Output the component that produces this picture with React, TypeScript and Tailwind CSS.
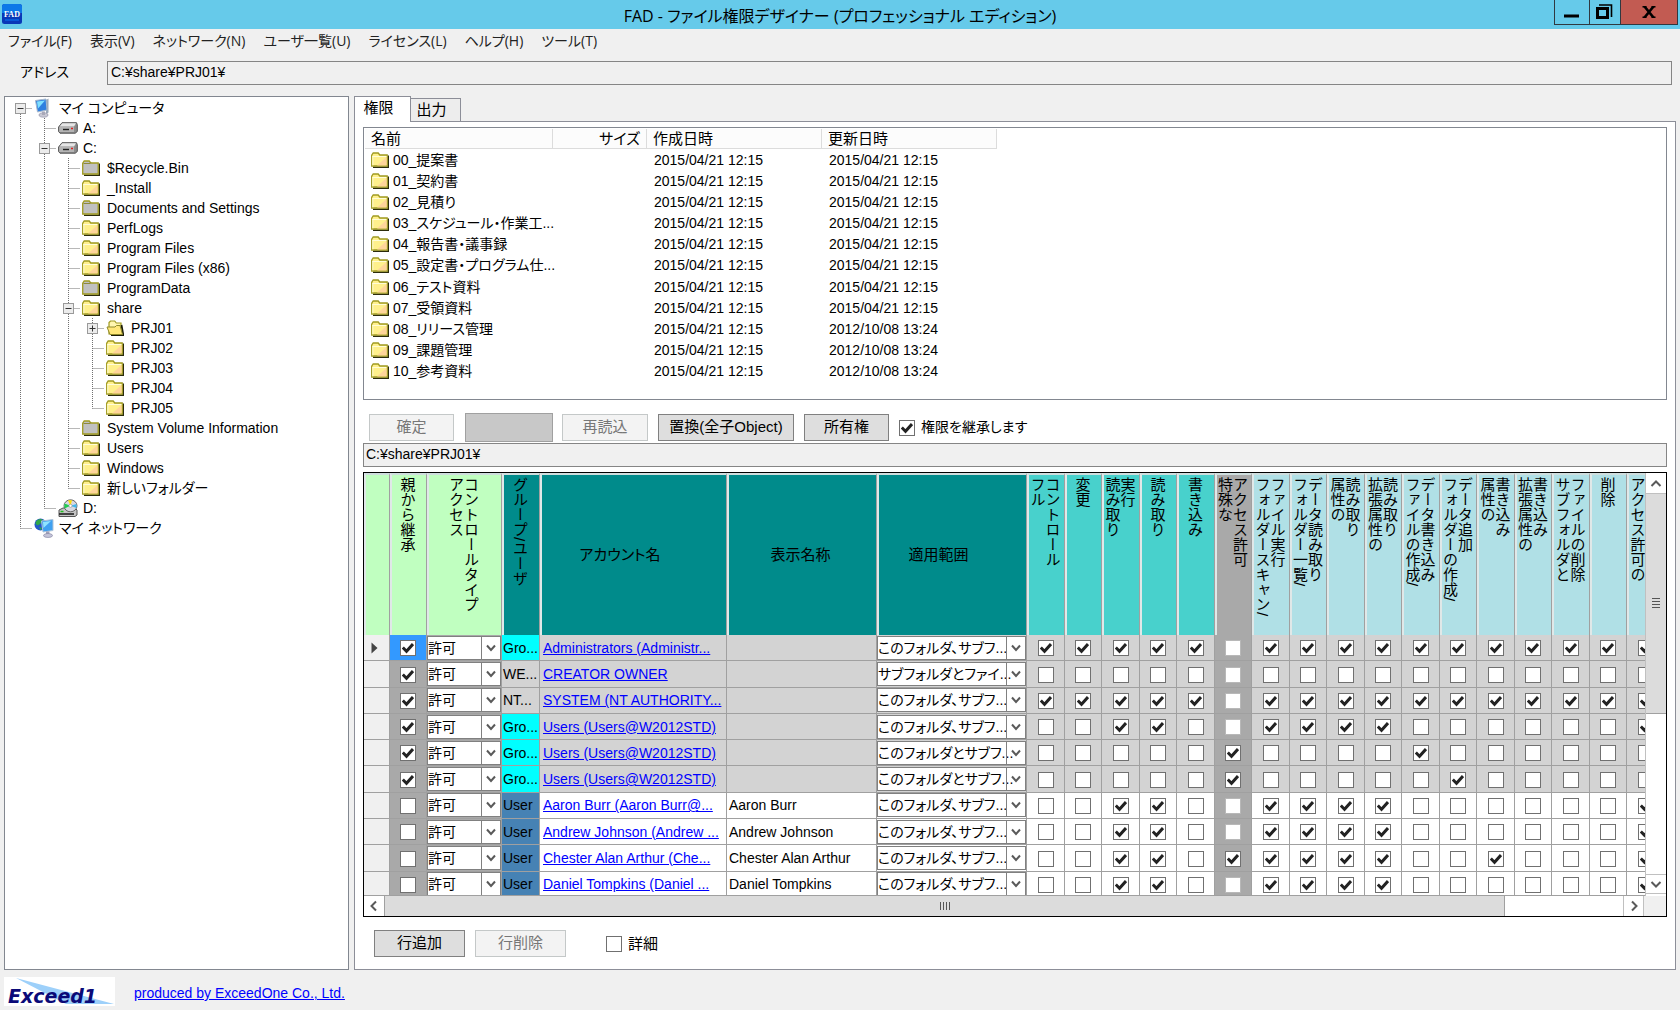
import { useState } from 'react';
import clsx from 'clsx';

/* ---------- Data ---------- */

const MENU = ['ファイル(F)', '表示(V)', 'ネットワーク(N)', 'ユーザ一覧(U)', 'ライセンス(L)', 'ヘルプ(H)', 'ツール(T)'];

type Guide = 'line' | 'tee' | 'end' | 'start';
type IconKind = 'computer' | 'drive' | 'folder' | 'hidden' | 'open' | 'cd' | 'network';

interface TreeNode {
  label: string;
  icon: IconKind;
  guides: Guide[];
  expander?: '+' | '-';
}

const TREE: TreeNode[] = [
  { label: 'マイ コンピュータ', icon: 'computer', guides: ['start'], expander: '-' },
  { label: 'A:', icon: 'drive', guides: ['line', 'tee'] },
  { label: 'C:', icon: 'drive', guides: ['line', 'tee'], expander: '-' },
  { label: '$Recycle.Bin', icon: 'hidden', guides: ['line', 'line', 'tee'] },
  { label: '_Install', icon: 'folder', guides: ['line', 'line', 'tee'] },
  { label: 'Documents and Settings', icon: 'hidden', guides: ['line', 'line', 'tee'] },
  { label: 'PerfLogs', icon: 'folder', guides: ['line', 'line', 'tee'] },
  { label: 'Program Files', icon: 'folder', guides: ['line', 'line', 'tee'] },
  { label: 'Program Files (x86)', icon: 'folder', guides: ['line', 'line', 'tee'] },
  { label: 'ProgramData', icon: 'hidden', guides: ['line', 'line', 'tee'] },
  { label: 'share', icon: 'folder', guides: ['line', 'line', 'tee'], expander: '-' },
  { label: 'PRJ01', icon: 'open', guides: ['line', 'line', 'line', 'tee'], expander: '+' },
  { label: 'PRJ02', icon: 'folder', guides: ['line', 'line', 'line', 'tee'] },
  { label: 'PRJ03', icon: 'folder', guides: ['line', 'line', 'line', 'tee'] },
  { label: 'PRJ04', icon: 'folder', guides: ['line', 'line', 'line', 'tee'] },
  { label: 'PRJ05', icon: 'folder', guides: ['line', 'line', 'line', 'end'] },
  { label: 'System Volume Information', icon: 'hidden', guides: ['line', 'line', 'tee'] },
  { label: 'Users', icon: 'folder', guides: ['line', 'line', 'tee'] },
  { label: 'Windows', icon: 'folder', guides: ['line', 'line', 'tee'] },
  { label: '新しいフォルダー', icon: 'folder', guides: ['line', 'line', 'end'] },
  { label: 'D:', icon: 'cd', guides: ['line', 'end'] },
  { label: 'マイ ネットワーク', icon: 'network', guides: ['end'] },
];

const FILES = [
  { name: '00_提案書', created: '2015/04/21 12:15', updated: '2015/04/21 12:15' },
  { name: '01_契約書', created: '2015/04/21 12:15', updated: '2015/04/21 12:15' },
  { name: '02_見積り', created: '2015/04/21 12:15', updated: '2015/04/21 12:15' },
  { name: '03_スケジュール・作業工...', created: '2015/04/21 12:15', updated: '2015/04/21 12:15' },
  { name: '04_報告書・議事録', created: '2015/04/21 12:15', updated: '2015/04/21 12:15' },
  { name: '05_設定書・プログラム仕...', created: '2015/04/21 12:15', updated: '2015/04/21 12:15' },
  { name: '06_テスト資料', created: '2015/04/21 12:15', updated: '2015/04/21 12:15' },
  { name: '07_受領資料', created: '2015/04/21 12:15', updated: '2015/04/21 12:15' },
  { name: '08_リリース管理', created: '2015/04/21 12:15', updated: '2012/10/08 13:24' },
  { name: '09_課題管理', created: '2015/04/21 12:15', updated: '2012/10/08 13:24' },
  { name: '10_参考資料', created: '2015/04/21 12:15', updated: '2012/10/08 13:24' },
];

const RIGHTS: { lines: string[]; tone: 'basic' | 'special' | 'detail' }[] = [
  { lines: ['フル', 'コントロール'], tone: 'basic' },
  { lines: ['変更'], tone: 'basic' },
  { lines: ['読み取り', '実行'], tone: 'basic' },
  { lines: ['読み取り'], tone: 'basic' },
  { lines: ['書き込み'], tone: 'basic' },
  { lines: ['特殊な', 'アクセス許可'], tone: 'special' },
  { lines: ['フォルダースキャン/', 'ファイル実行'], tone: 'detail' },
  { lines: ['フォルダー一覧/', 'データ読み取り'], tone: 'detail' },
  { lines: ['属性の', '読み取り'], tone: 'detail' },
  { lines: ['拡張属性の', '読み取り'], tone: 'detail' },
  { lines: ['ファイルの作成/', 'データ書き込み'], tone: 'detail' },
  { lines: ['フォルダーの作成/', 'データ追加'], tone: 'detail' },
  { lines: ['属性の', '書き込み'], tone: 'detail' },
  { lines: ['拡張属性の', '書き込み'], tone: 'detail' },
  { lines: ['サブフォルダと', 'ファイルの削除'], tone: 'detail' },
  { lines: ['削除'], tone: 'detail' },
  { lines: ['アクセス許可の', '読み取り'], tone: 'detail' },
];

const TONES = {
  basic: 'bg-[#48d1cc]',
  special: 'bg-[#a9a9a9]',
  detail: 'bg-[#b0e0e6]',
};

const SUBFOLDERS = 'このフォルダ、サブフ...';

// rights: one digit per column of RIGHTS
const ENTRIES = [
  { inherited: true, kind: 'Gro...', account: 'Administrators (Administr...', display: '', scope: SUBFOLDERS, rights: '11111011111111111' },
  { inherited: true, kind: 'WE...', account: 'CREATOR OWNER', display: '', scope: 'サブフォルダとファイ...', rights: '00000000000000000' },
  { inherited: true, kind: 'NT...', account: 'SYSTEM (NT AUTHORITY...', display: '', scope: SUBFOLDERS, rights: '11111011111111111' },
  { inherited: true, kind: 'Gro...', account: 'Users (Users@W2012STD)', display: '', scope: SUBFOLDERS, rights: '00110011110000001' },
  { inherited: true, kind: 'Gro...', account: 'Users (Users@W2012STD)', display: '', scope: 'このフォルダとサブフ...', rights: '00000100001000000' },
  { inherited: true, kind: 'Gro...', account: 'Users (Users@W2012STD)', display: '', scope: 'このフォルダとサブフ...', rights: '00000100000100000' },
  { inherited: false, kind: 'User', account: 'Aaron Burr (Aaron Burr@...', display: 'Aaron Burr', scope: SUBFOLDERS, rights: '00110011110000001' },
  { inherited: false, kind: 'User', account: 'Andrew Johnson (Andrew ...', display: 'Andrew Johnson', scope: SUBFOLDERS, rights: '00110011110000001' },
  { inherited: false, kind: 'User', account: 'Chester Alan Arthur (Che...', display: 'Chester Alan Arthur', scope: SUBFOLDERS, rights: '00110111110010001' },
  { inherited: false, kind: 'User', account: 'Daniel Tompkins (Daniel ...', display: 'Daniel Tompkins', scope: SUBFOLDERS, rights: '00110011110000001' },
];

/* ---------- Icons ---------- */

function FolderIcon({ gray = false }: { gray?: boolean }) {
  return (
    <svg className="h-4 w-[18px] shrink-0" viewBox="0 0 18 16">
      <path d="M2 15.2h15.2V3.5" fill="none" stroke="#2c2c0c" strokeWidth="1.6" />
      <path d="M.7 14V3.2L2.2 1h5l1.6 2h7.4v11z" fill={gray ? '#c0c0c0' : '#fff08c'} stroke="#a09a20" strokeWidth="1.3" />
      {gray ? (
        <path d="M1.5 3.5h6.700l.8-1" fill="none" stroke="#8f8a3a" />
      ) : (
        <>
          <path d="M6 13.400L15.600 5v8.400z" fill="#ffd59a" />
          <path d="M1.500 4.500h14M1.800 4v9.400" fill="none" stroke="#fffdd8" />
        </>
      )}
    </svg>
  );
}

function TreeIcon({ kind }: { kind: IconKind }) {
  switch (kind) {
    case 'folder':
      return <FolderIcon />;
    case 'hidden':
      return <FolderIcon gray />;
    case 'open':
      return (
        <svg className="h-4 w-[18px] shrink-0" viewBox="0 0 18 16">
          <path d="M3 14V2.500L4.500 1h4.200l1.600 2h4.700v11z" fill="#fff6b0" stroke="#a09a20" strokeWidth="1.2" />
          <path d="M15.500 5l1.700 9.500v1H5" fill="none" stroke="#1c1c08" strokeWidth="1.8" />
          <path d="M4 14.500L1 7h8l1.500-1.500H14l2.500 9z" fill="#ffe77a" stroke="#8f8a2a" />
        </svg>
      );
    case 'drive':
      return (
        <svg className="h-3 w-5 shrink-0" viewBox="0 0 20 12">
          <path d="M4 .7h14.500l.8 2v6.500l-1.800 2H2L.6 9.500V5z" fill="#8c8c8c" stroke="#555" />
          <path d="M4.300 1.200H18L16 4.500H1.500z" fill="#e6e6e6" />
          <path d="M1.200 5H16v5H1.200z" fill="#b4b4b4" />
          <path d="M5 7.500h6" stroke="#222" strokeWidth="1.4" />
          <path d="M13 6.500h2" stroke="#e02020" strokeWidth="1.4" />
        </svg>
      );
    case 'cd':
      return (
        <svg className="h-[18px] w-5 shrink-0" viewBox="0 0 20 18">
          <path d="M1 11l4-2h12l2 2v5l-2 1.500H1z" fill="#c4c4c4" stroke="#555" />
          <ellipse cx="12.500" cy="6.800" rx="6.500" ry="6" fill="#d8d8e0" stroke="#666" />
          <path d="M12.500 6.800L10 1.300h4z" fill="#ffe000" />
          <path d="M12.500 6.800L6.500 4.500v5z" fill="#20d050" />
          <path d="M12.500 6.800l6-1.800v4z" fill="#40b8f0" />
          <circle cx="12.500" cy="6.800" r="1.600" fill="#fff" stroke="#888" strokeWidth=".6" />
          <path d="M1 15h15" stroke="#222" strokeWidth="1.600" />
          <path d="M2.500 12.500h3" stroke="#20c020" strokeWidth="1.500" />
        </svg>
      );
    case 'computer':
      return (
        <svg className="h-5 w-[18px] shrink-0" viewBox="0 0 18 20">
          <path d="M12 2l2.500-1.500v14l-2.500 2z" fill="#9aa8b8" />
          <path d="M1.500 2.500L12 1l1 11-9.500 2z" fill="#2f7fe0" stroke="#a8b8cc" />
          <path d="M3 3.500l8-1-7 8z" fill="#7fe0ff" />
          <ellipse cx="9.500" cy="17" rx="4.500" ry="2.200" fill="#c8c8d4" stroke="#8888a0" strokeWidth=".6" />
          <path d="M8 13.500h3V17H8z" fill="#a8a8b8" />
        </svg>
      );
    case 'network':
      return (
        <svg className="h-5 w-5 shrink-0" viewBox="0 0 20 20">
          <circle cx="6.500" cy="6.500" r="6" fill="#2458c8" />
          <path d="M2 3.500C4 .8 7 .5 8.500 1.500L7 5 4 7.500 1.500 6zM5 9l3 1-1.500 2.200z" fill="#30a848" />
          <path d="M7.500 3L19 1.500v11L9 14z" fill="#3fa0f0" stroke="#b0c4d8" />
          <path d="M9 4l8-1-7.500 7z" fill="#90e4ff" />
          <path d="M12 13.500h3.500V17H12z" fill="#a0a0b8" />
          <ellipse cx="14" cy="17.500" rx="4.500" ry="2" fill="#c4c4d8" stroke="#8080a0" strokeWidth=".6" />
        </svg>
      );
  }
}

function Chevron({ className, d }: { className: string; d: string }) {
  return (
    <svg className={className} viewBox="0 0 12 12" fill="none" stroke="#5a5a5a" strokeWidth="2">
      <path d={d} />
    </svg>
  );
}

/* ---------- Small controls ---------- */

function Tick({ checked, label, faint = false }: { checked: boolean; label: string; faint?: boolean }) {
  const [on, setOn] = useState(checked);
  return (
    <span className="inline-grid size-4 shrink-0 place-items-center align-middle">
      <input
        type="checkbox"
        aria-label={label}
        checked={on}
        onChange={() => setOn(!on)}
        className={clsx(
          'col-start-1 row-start-1 size-4 appearance-none border bg-white',
          faint && !on ? 'border-[#b8b8b8]' : 'border-[#707070]'
        )}
      />
      {on && (
        <svg className="pointer-events-none col-start-1 row-start-1 size-3" viewBox="0 0 12 12" fill="none" stroke="#222" strokeWidth="3">
          <path d="M.8 5.500L4.500 9.200 11 2" />
        </svg>
      )}
    </span>
  );
}

function Combo({ value, label }: { value: string; label: string }) {
  return (
    <div className="grid h-6">
      <select
        aria-label={label}
        defaultValue={value}
        className="col-start-1 row-start-1 w-full appearance-none border border-[#808080] bg-white text-sm text-black"
      >
        <option>{value}</option>
      </select>
      <span className="pointer-events-none col-start-1 row-start-1 flex w-5 items-center justify-center justify-self-end border border-[#808080]">
        <Chevron className="size-3" d="M2 3.500l4 4.500 4-4.500" />
      </span>
    </div>
  );
}

function PushButton({ children, disabled = false, className }: { children?: React.ReactNode; disabled?: boolean; className?: string }) {
  return (
    <button
      disabled={disabled}
      className={clsx(
        'h-[27px] border pb-0.5 text-[15px]',
        disabled ? 'border-[#c4c8c8] bg-[#f3f3f3] text-[#777]' : 'border-[#808080] bg-[#dedede]',
        className
      )}
    >
      {children}
    </button>
  );
}

/* ---------- Tree ---------- */

const GUIDE_PATHS: Record<Guide, string> = {
  line: 'M12.500 0v20',
  tee: 'M12.500 0v20M12.500 10.500h11.500',
  end: 'M12.500 0v10.500M12.500 10.500h11.500',
  start: 'M12.500 10v10M12.500 10.500h11.500',
};

function TreeRow({ node }: { node: TreeNode }) {
  return (
    <li className="flex h-5 items-center whitespace-nowrap">
      {node.guides.map((guide, i) => (
        <svg key={i} className="h-5 w-6 shrink-0" viewBox="0 0 24 20" fill="none">
          <path d={GUIDE_PATHS[guide]} stroke="#707070" strokeDasharray="1 1" />
          {node.expander && i === node.guides.length - 1 && (
            <>
              <rect x="7.500" y="5.500" width="10" height="10" fill="#ececec" stroke="#9a9a9a" />
              <path d={node.expander === '+' ? 'M9.500 10.500h6M12.500 7.500v6' : 'M9.500 10.500h6'} stroke="#333" />
            </>
          )}
        </svg>
      ))}
      <span className="flex w-[27px] shrink-0 items-center pl-0.5">
        <TreeIcon kind={node.icon} />
      </span>
      <span>{node.label}</span>
    </li>
  );
}

/* ---------- File list ---------- */

function FileList() {
  return (
    <div className="h-[273px] shrink-0 overflow-hidden border border-[#828790] bg-white p-px">
      <table className="h-[253px] w-[632px] table-fixed border-separate border-spacing-0 text-left">
        <colgroup>
          <col className="w-[188px]" />
          <col className="w-[94px]" />
          <col className="w-[175px]" />
          <col className="w-[175px]" />
        </colgroup>
        <thead>
          <tr className="h-5">
            {['名前', 'サイズ', '作成日時', '更新日時'].map((title) => (
              <th
                key={title}
                className={clsx(
                  'h-5 border-r border-b border-[#dcdcdc] bg-[#fcfcfc] px-1.5 py-0 text-[15px] leading-[18px] font-normal',
                  title === 'サイズ' && 'text-right'
                )}
              >
                {title}
              </th>
            ))}
          </tr>
        </thead>
        <tbody>
          {FILES.map((file) => (
            <tr key={file.name}>
              <td className="p-0 pl-1.5 leading-5">
                <span className="flex items-center gap-1 whitespace-nowrap">
                  <FolderIcon />
                  {file.name}
                </span>
              </td>
              <td className="p-0" />
              <td className="p-0 pl-[7px] leading-5">{file.created}</td>
              <td className="p-0 pl-[7px] leading-5">{file.updated}</td>
            </tr>
          ))}
        </tbody>
      </table>
    </div>
  );
}

/* ---------- Permission grid ---------- */

const HEAD =
  'h-[162px] overflow-hidden border-t-2 border-r border-l-2 border-t-[#cfdede] border-r-[#a0a0a0] border-l-[#e0e8e8] p-0 text-[15px] font-normal';
const CELL = 'overflow-hidden border-r border-b border-[#a0a0a0] p-0 whitespace-nowrap';

function VerticalHead({ lines, tone }: { lines: string[]; tone: string }) {
  return (
    <th className={clsx(HEAD, 'align-top', tone)}>
      <div className="flex justify-center pt-0.5 pr-1">
        <div className="[writing-mode:vertical-lr] text-left leading-[15px] [font-feature-settings:normal]">
          {lines.map((line, i) => (
            <div key={i}>{line}</div>
          ))}
        </div>
      </div>
    </th>
  );
}

function PermissionGrid() {
  return (
    <div className="mt-[5px] flex min-h-0 flex-1 flex-col border border-black bg-[#f0f0f0]">
      <div className="flex min-h-0 flex-1">
        <div className="min-w-0 flex-1 overflow-hidden border-b border-[#a0a0a0] bg-white">
          <table className="h-[425px] w-[1301px] table-fixed border-separate border-spacing-0 text-left">
            <colgroup>
              <col className="w-[26px]" />
              <col className="w-[37px]" />
              <col className="w-[75px]" />
              <col className="w-[38px]" />
              <col className="w-[187px]" />
              <col className="w-[150px]" />
              <col className="w-[150px]" />
              {RIGHTS.map((_, i) => (
                <col key={i} className={i % 2 ? 'w-[37px]' : 'w-[38px]'} />
              ))}
            </colgroup>
            <thead>
              <tr className="h-[162px]">
                <th className={clsx(HEAD, 'bg-[#c0ffc0]')} aria-label="行" />
                <VerticalHead lines={['親から継承']} tone="bg-[#c0ffc0]" />
                <VerticalHead lines={['アクセス', 'コントロールタイプ']} tone="bg-[#c0ffc0]" />
                <VerticalHead lines={['グループ/ユーザ']} tone="bg-[#008b8b]" />
                <th className={clsx(HEAD, 'bg-[#008b8b] pr-7 text-center align-middle')}>アカウント名</th>
                <th className={clsx(HEAD, 'bg-[#008b8b] pr-1 text-center align-middle')}>表示名称</th>
                <th className={clsx(HEAD, 'bg-[#008b8b] pr-7 text-center align-middle')}>適用範囲</th>
                {RIGHTS.map((right, i) => (
                  <VerticalHead key={i} lines={right.lines} tone={TONES[right.tone]} />
                ))}
              </tr>
            </thead>
            <tbody>
              {ENTRIES.map((entry, row) => (
                <tr key={row} className={entry.inherited ? 'bg-[#d3d3d3]' : 'bg-white'}>
                  <td className={clsx(CELL, 'bg-[#f0f0f0]')}>
                    {row === 0 && (
                      <svg className="ml-[7px] h-3 w-[7px]" viewBox="0 0 7 12">
                        <path d="M.5.5L6.500 6 .5 11.500z" fill="#444" />
                      </svg>
                    )}
                  </td>
                  <td className={clsx(CELL, 'text-center leading-4', row === 0 ? 'bg-[#3399ff]' : 'bg-[#a9a9a9]')}>
                    <Tick checked={entry.inherited} label="親から継承" />
                  </td>
                  <td className={clsx(CELL, 'bg-[#a9a9a9]')}>
                    <Combo value="許可" label="アクセスコントロールタイプ" />
                  </td>
                  <td
                    className={clsx(
                      CELL,
                      entry.kind === 'Gro...' && 'bg-[#00ffff]',
                      entry.kind === 'User' && 'bg-[#4682b4]'
                    )}
                  >
                    <span className="pl-px">{entry.kind}</span>
                  </td>
                  <td className={CELL}>
                    <a href="#account" className="ml-[3px] text-[#0000ff] underline">
                      {entry.account}
                    </a>
                  </td>
                  <td className={CELL}>
                    <span className="pl-0.5">{entry.display}</span>
                  </td>
                  <td className={CELL}>
                    <Combo value={entry.scope} label="適用範囲" />
                  </td>
                  {RIGHTS.map((right, i) => (
                    <td key={i} className={clsx(CELL, 'text-center leading-4', right.tone === 'special' && 'bg-[#a9a9a9]')}>
                      <Tick checked={entry.rights[i] === '1'} label={right.lines.join('')} faint={right.tone === 'special'} />
                    </td>
                  ))}
                </tr>
              ))}
            </tbody>
          </table>
        </div>

        {/* Vertical scroll bar */}
        <div className="flex w-[21px] flex-col border-l border-[#c0c0c0] bg-white pt-px">
          <button aria-label="上へ" className="flex h-5 items-center justify-center border-b border-[#c0c0c0]">
            <Chevron className="size-3" d="M1.500 8L6 3.500 10.500 8" />
          </button>
          <div className="flex flex-[15] flex-col items-center justify-center gap-0.5 border-b border-[#a0a0a0] bg-[#dcdcdc]">
            <span className="h-px w-2 bg-[#555]" />
            <span className="h-px w-2 bg-[#555]" />
            <span className="h-px w-2 bg-[#555]" />
            <span className="h-px w-2 bg-[#555]" />
          </div>
          <div className="flex-[11]" />
          <button aria-label="下へ" className="mb-0.5 flex h-5 items-center justify-center border-y border-[#c0c0c0]">
            <Chevron className="size-3" d="M1.500 4L6 8.500 10.500 4" />
          </button>
        </div>
      </div>

      {/* Horizontal scroll bar */}
      <div className="flex h-5 shrink-0">
        <div className="flex flex-1 bg-white">
          <button aria-label="左へ" className="flex w-[21px] items-center justify-center border-r border-[#a0a0a0]">
            <Chevron className="size-3" d="M8 1.500L3.500 6 8 10.500" />
          </button>
          <div className="flex flex-[19] items-center justify-center gap-0.5 border-r border-[#a0a0a0] bg-[#dcdcdc]">
            <span className="h-2 w-px bg-[#555]" />
            <span className="h-2 w-px bg-[#555]" />
            <span className="h-2 w-px bg-[#555]" />
            <span className="h-2 w-px bg-[#555]" />
          </div>
          <div className="flex-[2]" />
          <button aria-label="右へ" className="flex w-[21px] items-center justify-center border-x border-[#c0c0c0]">
            <Chevron className="size-3" d="M4 1.500L8.500 6 4 10.500" />
          </button>
        </div>
        <div className="w-[22px]" />
      </div>
    </div>
  );
}

/* ---------- Window ---------- */

export default function App() {
  return (
    <div className="flex h-screen flex-col bg-[#f0f0f0] font-['Liberation_Sans','Noto_Sans_CJK_JP',sans-serif] text-sm leading-5 text-black [font-feature-settings:'palt']">
      {/* Title bar */}
      <header className="flex h-[29px] shrink-0 items-start bg-[#66caea] pr-0.5 font-['Open_Sans','Noto_Sans_CJK_JP',sans-serif]">
        <div className="w-[126px] pt-1 pl-0.5">
          <svg className="size-5" viewBox="0 0 20 20">
            <rect width="20" height="20" rx="2.500" fill="#0838b8" />
            <path d="M0 9V2.500Q0 0 2.500 0h15Q20 0 20 2.500V9z" fill="#0c78e8" />
            <path d="M3 16h14" stroke="#0858d8" strokeWidth="2" />
            <text x="10" y="13" textAnchor="middle" fontFamily="Liberation Serif, serif" fontSize="8" fontWeight="700" fill="#fff">
              FAD
            </text>
          </svg>
        </div>
        <h1 className="flex-1 text-center text-base leading-8">FAD - ファイル権限デザイナー (プロフェッショナル エディション)</h1>
        <div className="flex h-[25px] border border-t-0 border-[#303840]">
          <button aria-label="最小化" className="flex w-[34px] items-center justify-center">
            <svg className="h-5 w-4" viewBox="0 0 16 20">
              <path d="M0 14h15" stroke="#000" strokeWidth="3" />
            </svg>
          </button>
          <button aria-label="元に戻す" className="flex w-8 items-center justify-center border-x border-[#303840] pr-0.5">
            <svg className="h-4 w-[17px]" viewBox="0 0 17 16" fill="none" stroke="#000">
              <rect x="1.500" y="4.500" width="10" height="9" strokeWidth="3" />
              <path d="M3 1h12.500v12" strokeWidth="1.600" />
            </svg>
          </button>
          <button aria-label="閉じる" className="flex w-14 items-center justify-center bg-[#c25b52]">
            <svg className="h-3 w-[14px]" viewBox="0 0 14 12" fill="none" stroke="#000">
              <path d="M2.500.5l9 11M11.500.5l-9 11" strokeWidth="2.600" />
              <path d="M.5.7h4M9.500.7h4M.5 11.300h4M9.500 11.300h4" strokeWidth="1.400" />
            </svg>
          </button>
        </div>
      </header>

      {/* Menu */}
      <nav className="flex h-6 shrink-0 items-center gap-[18px] pl-2 font-['Open_Sans','Noto_Sans_CJK_JP',sans-serif] text-[#222]">
        {MENU.map((item) => (
          <button key={item}>{item}</button>
        ))}
      </nav>

      {/* Address */}
      <div className="mt-2 mr-2 mb-[11px] ml-5 flex h-6 shrink-0 items-center">
        <label htmlFor="address" className="w-[87px] pb-0.5">
          アドレス
        </label>
        <input id="address" readOnly defaultValue="C:¥share¥PRJ01¥" className="h-6 min-w-0 flex-1 border border-[#858585] bg-[#f0f0f0] px-[3px] pb-0.5" />
      </div>

      <main className="flex min-h-0 flex-1 gap-[5px] px-1">
        {/* Tree */}
        <aside className="w-[345px] shrink-0 overflow-hidden border border-[#828790] bg-white pt-px pl-[3px]">
          <ul>
            {TREE.map((node) => (
              <TreeRow key={node.label} node={node} />
            ))}
          </ul>
        </aside>

        {/* Tabs */}
        <section className="flex min-w-0 flex-1 flex-col">
          <div role="tablist" className="z-10 -mb-px flex h-[26px] shrink-0 items-end text-[15px]">
            <button role="tab" aria-selected="true" className="h-[26px] w-[57px] border border-b-0 border-[#8c8e98] bg-white pr-2 pb-1">
              権限
            </button>
            <button role="tab" aria-selected="false" className="-ml-px h-6 w-[51px] border border-[#8c8e98] bg-[#ededed] pr-2">
              出力
            </button>
          </div>
          <div className="flex min-h-0 flex-1 flex-col border border-[#8c8e98] bg-white px-2 pt-[5px] pb-3">
            <FileList />

            <div className="mt-[13px] flex h-[29px] shrink-0 items-center pl-1.5">
              <PushButton disabled className="w-[85px]">
                確定
              </PushButton>
              <span className="ml-[11px] h-[29px] w-[88px] border border-[#a0a0a0] bg-[#c8c8c8]" />
              <PushButton disabled className="ml-[9px] w-[86px]">
                再読込
              </PushButton>
              <PushButton className="ml-[10px] w-[136px]">置換(全子Object)</PushButton>
              <PushButton className="ml-[10px] w-[85px]">所有権</PushButton>
              <span className="ml-[10px] flex items-center gap-1.5">
                <Tick checked label="権限を継承します" />
                <span className="pb-0.5">権限を継承します</span>
              </span>
            </div>
            <input
              aria-label="対象フォルダ"
              readOnly
              defaultValue="C:¥share¥PRJ01¥"
              className="mt-px h-6 shrink-0 border border-[#858585] bg-[#f0f0f0] px-0.5 pb-0.5"
            />

            <PermissionGrid />

            <div className="mt-[13px] flex shrink-0 items-center pl-[11px]">
              <PushButton className="w-[91px]">行追加</PushButton>
              <PushButton disabled className="ml-[10px] w-[91px]">
                行削除
              </PushButton>
              <span className="ml-10 flex items-center gap-1.5">
                <Tick checked={false} label="詳細" />
                <span className="text-[15px]">詳細</span>
              </span>
            </div>
          </div>
        </section>
      </main>

      {/* Footer */}
      <footer className="flex h-10 shrink-0 items-center gap-[19px] pt-1.5 pb-1 pl-1">
        <svg className="h-[29px] w-[111px]" viewBox="0 0 111 29">
          <rect width="111" height="29" fill="#fff" />
          <path d="M12 1l98 26H62z" fill="#9dd0fa" />
          <text x="4" y="26" fontFamily="DejaVu Sans, sans-serif" fontSize="19" fontWeight="700" fontStyle="italic" fill="#0a0a78">
            Exceed1
          </text>
        </svg>
        <a href="#exceedone" className="pt-1 text-[#0000ff] underline">
          produced by ExceedOne Co., Ltd.
        </a>
      </footer>
    </div>
  );
}
